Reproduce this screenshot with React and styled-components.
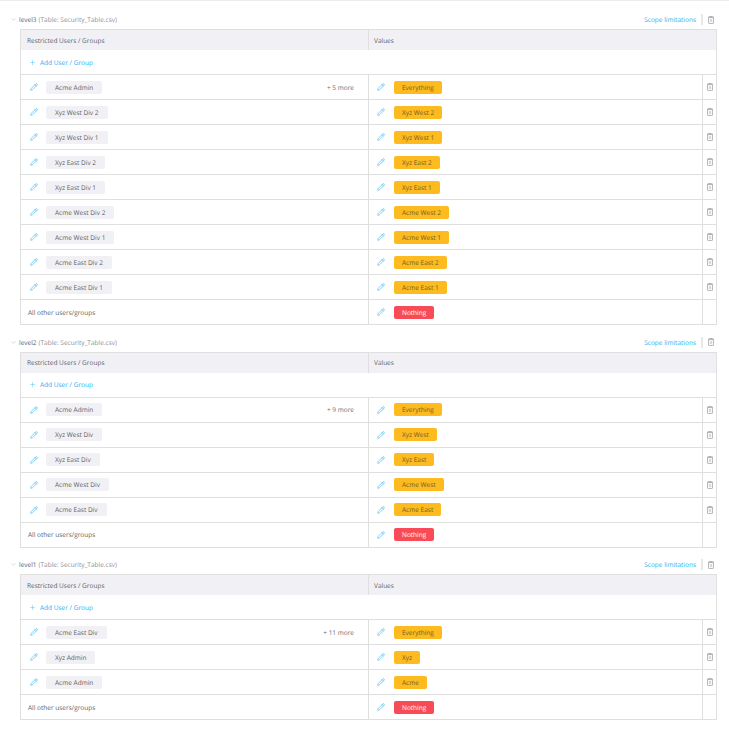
import React from "react";
import styled, { createGlobalStyle } from "styled-components";
import { ChevronDown, Plus, Pencil } from "lucide-react";

const GlobalStyle = createGlobalStyle`
  html, body {
    margin: 0;
    padding: 0;
    background: #fff;
    font-family: "Open Sans", "Noto Sans", sans-serif;
    color: #5c5d66;
    text-rendering: geometricPrecision;
  }
`;

const Levels = [
  {
    id: "level3",
    more: "+ 5 more",
    rows: [
      ["Acme Admin", "Everything"],
      ["Xyz West Div 2", "Xyz West 2"],
      ["Xyz West Div 1", "Xyz West 1"],
      ["Xyz East Div 2", "Xyz East 2"],
      ["Xyz East Div 1", "Xyz East 1"],
      ["Acme West Div 2", "Acme West 2"],
      ["Acme West Div 1", "Acme West 1"],
      ["Acme East Div 2", "Acme East 2"],
      ["Acme East Div 1", "Acme East 1"],
    ],
  },
  {
    id: "level2",
    more: "+ 9 more",
    rows: [
      ["Acme Admin", "Everything"],
      ["Xyz West Div", "Xyz West"],
      ["Xyz East Div", "Xyz East"],
      ["Acme West Div", "Acme West"],
      ["Acme East Div", "Acme East"],
    ],
  },
  {
    id: "level1",
    more: "+ 11 more",
    rows: [
      ["Acme East Div", "Everything"],
      ["Xyz Admin", "Xyz"],
      ["Acme Admin", "Acme"],
    ],
  },
];

const Page = styled.div`
  width: 729px;
  height: 731px;
  overflow: hidden;
  box-sizing: border-box;
  border-top: 1px solid #ececec;
`;

const Section = styled.section`
  padding: 0 12px 0 10px;
  margin-bottom: 10.5px;
  &:first-child {
    padding-top: 12px;
  }
`;

const TitleBar = styled.div`
  height: 13px;
  padding-bottom: 3px;
  display: flex;
  align-items: center;
  font-size: 6.5px;
`;

const Collapse = styled.span`
  width: 9px;
  display: flex;
  color: #b0b1b8;
`;

const Level = styled.span`
  font-weight: 500;
  margin-right: 2px;
`;

const TableName = styled.span`
  color: #8d8e96;
`;

const ScopeLink = styled.a`
  margin-left: auto;
  color: #29aef0;
  padding-right: 5px;
  border-right: 2px solid #e8e8e8;
  line-height: 11px;
`;

const TitleTrash = styled.span`
  display: flex;
  width: 14px;
  box-sizing: border-box;
  padding-left: 2px;
  justify-content: center;
`;

const Table = styled.div`
  margin-left: 10px;
  width: 697px;
  box-sizing: border-box;
  border: 1px solid #dfdfdf;
  font-size: 6.5px;
`;

const HeadRow = styled.div`
  height: 20px;
  display: grid;
  grid-template-columns: 347px 1fr;
  background: #f1f1f5;
  align-items: stretch;
`;

const HeadCell = styled.div`
  display: flex;
  align-items: center;
  padding-left: 6px;
  & + & {
    border-left: 1px solid #dfdfdf;
    padding-left: 5px;
  }
`;

const AddRow = styled.div`
  height: 24px;
  display: flex;
  align-items: center;
  padding-left: 8px;
  gap: 4px;
  color: #29aef0;
`;

const Row = styled.div`
  height: 25px;
  box-sizing: border-box;
  display: grid;
  grid-template-columns: 347px 1fr 14px;
  border-top: 1px solid #dfdfdf;
`;

const UserCell = styled.div`
  display: flex;
  align-items: center;
  padding: 0 14px 0 9px;
  gap: 8px;
`;

const ValueCell = styled.div`
  display: flex;
  align-items: center;
  padding-left: 8px;
  gap: 9px;
  border-left: 1px solid #dfdfdf;
`;

const TrashCell = styled.div`
  display: flex;
  align-items: center;
  justify-content: center;
  box-sizing: border-box;
  padding-left: 1px;
  border-left: 1px solid #dfdfdf;
`;

const Chip = styled.span`
  height: 13px;
  line-height: 13px;
  padding: 0 9px;
  border-radius: 2px;
  background: #f1f1f5;
`;

const ValueChip = styled(Chip)`
  padding: 0 8px;
  background: ${(p) => (p.$none ? "#f94b57" : "#fdbb1f")};
  color: ${(p) => (p.$none ? "#fff" : "#6f5c28")};
`;

const More = styled.span`
  margin-left: auto;
  color: #6a6b73;
`;

const OtherLabel = styled.span`
  margin-left: -2px;
`;

const Edit = () => <Pencil size={8} color="#3fb4f2" strokeWidth={1.9} style={{ flex: "none" }} />;

const Trash = () => (
  <svg width="6" height="8" viewBox="0 0 6 8" fill="none" stroke="#a8a9af" strokeWidth="0.9">
    <path d="M0 1.2h6M2 1.2V.4h2v.8" />
    <rect x=".6" y="1.2" width="4.8" height="6.4" rx=".6" />
    <path d="M3 2.8v3.4" />
  </svg>
);

function LevelTable({ level }) {
  return (
    <Section>
      <TitleBar>
        <Collapse>
          <ChevronDown size={7} strokeWidth={1.5} />
        </Collapse>
        <Level>{level.id}</Level>
        <TableName>(Table: Security_Table.csv)</TableName>
        <ScopeLink>Scope limitations</ScopeLink>
        <TitleTrash>
          <Trash />
        </TitleTrash>
      </TitleBar>
      <Table>
        <HeadRow>
          <HeadCell>Restricted Users / Groups</HeadCell>
          <HeadCell>Values</HeadCell>
        </HeadRow>
        <AddRow>
          <Plus size={7} strokeWidth={1.3} />
          Add User / Group
        </AddRow>
        {level.rows.map(([user, value], i) => (
          <Row key={user}>
            <UserCell>
              <Edit />
              <Chip>{user}</Chip>
              {i === 0 && <More>{level.more}</More>}
            </UserCell>
            <ValueCell>
              <Edit />
              <ValueChip>{value}</ValueChip>
            </ValueCell>
            <TrashCell>
              <Trash />
            </TrashCell>
          </Row>
        ))}
        <Row>
          <UserCell>
            <OtherLabel>All other users/groups</OtherLabel>
          </UserCell>
          <ValueCell>
            <Edit />
            <ValueChip $none>Nothing</ValueChip>
          </ValueCell>
          <TrashCell />
        </Row>
      </Table>
    </Section>
  );
}

export default function App() {
  return (
    <Page>
      <GlobalStyle />
      {Levels.map((level) => (
        <LevelTable key={level.id} level={level} />
      ))}
    </Page>
  );
}
